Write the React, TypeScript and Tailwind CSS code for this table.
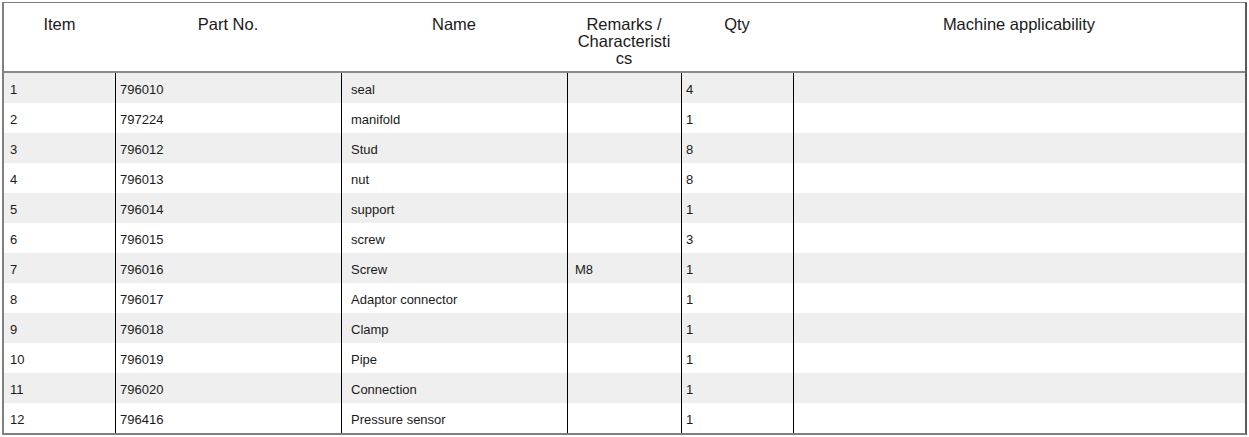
const rows = [
  { item: '1', part: '796010', name: 'seal', remarks: '', qty: '4' },
  { item: '2', part: '797224', name: 'manifold', remarks: '', qty: '1' },
  { item: '3', part: '796012', name: 'Stud', remarks: '', qty: '8' },
  { item: '4', part: '796013', name: 'nut', remarks: '', qty: '8' },
  { item: '5', part: '796014', name: 'support', remarks: '', qty: '1' },
  { item: '6', part: '796015', name: 'screw', remarks: '', qty: '3' },
  { item: '7', part: '796016', name: 'Screw', remarks: 'M8', qty: '1' },
  { item: '8', part: '796017', name: 'Adaptor connector', remarks: '', qty: '1' },
  { item: '9', part: '796018', name: 'Clamp', remarks: '', qty: '1' },
  { item: '10', part: '796019', name: 'Pipe', remarks: '', qty: '1' },
  { item: '11', part: '796020', name: 'Connection', remarks: '', qty: '1' },
  { item: '12', part: '796416', name: 'Pressure sensor', remarks: '', qty: '1' },
];

const cols = 'grid grid-cols-[111px_226px_226px_114px_112px_1fr]';

export default function App() {
  return (
    <div className="bg-white h-[437px] pt-[2px] pl-[2px] font-['Liberation_Sans',Arial,sans-serif] text-[#1a1a1a]">
      <div className="w-[1245px] border-2 border-t border-[#808080] border-r-[#5a5a5a]">
        <div className={`${cols} h-[70px] border-b-2 border-[#8a8a8a] text-[16.5px] leading-[17px] text-center`}>
          <div className="pt-[13px]">Item</div>
          <div className="pt-[13px]">Part No.</div>
          <div className="pt-[13px]">Name</div>
          <div className="pt-[13px] px-2 [overflow-wrap:anywhere]">Remarks / Characteristics</div>
          <div className="pt-[13px]">Qty</div>
          <div className="pt-[13px]">Machine applicability</div>
        </div>

        {rows.map((r, i) => (
          <div
            key={r.item}
            className={`${cols} h-[30px] text-[13px] ${i % 2 === 0 ? 'bg-[#efefef]' : 'bg-white'}`}
          >
            <div className="flex items-center pt-[3px] px-[6px]">{r.item}</div>
            <div className="flex items-center pt-[3px] px-[4px] border-l border-black">{r.part}</div>
            <div className="flex items-center pt-[3px] px-[9px] border-l border-black">{r.name}</div>
            <div className="flex items-center pt-[3px] px-[7px] border-l border-black">{r.remarks}</div>
            <div className="flex items-center pt-[3px] px-[4px] border-l border-black">{r.qty}</div>
            <div className="border-l border-black"></div>
          </div>
        ))}
      </div>
    </div>
  );
}
